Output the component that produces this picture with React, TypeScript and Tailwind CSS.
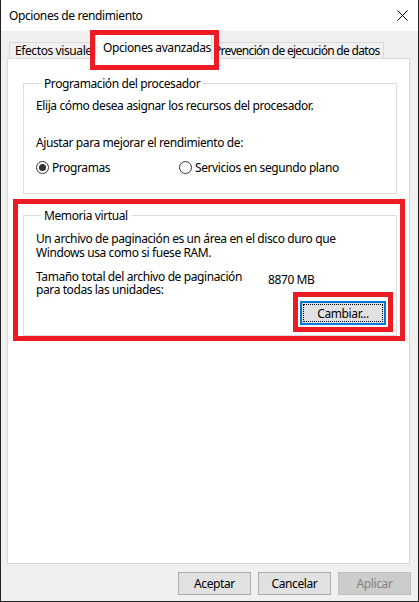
import type { ReactNode } from 'react'

const FONT = "font-['Noto_Sans',_'Liberation_Sans',_sans-serif]"

function Radio({ checked, label }: { checked?: boolean; label: string }) {
  return (
    <label className="flex items-center gap-[3px]">
      <span className="flex h-[13px] w-[13px] items-center justify-center rounded-full border border-[#333333] bg-white">
        {checked && <span className="h-[7px] w-[7px] rounded-full bg-[#333333]" />}
      </span>
      <span>{label}</span>
    </label>
  )
}

function GroupBox({ title, className, children }: { title: string; className?: string; children: ReactNode }) {
  return (
    <fieldset className={`w-[374px] border border-[#dcdcdc] ${className ?? ''}`}>
      <legend className="ml-[5px] px-[3px] leading-[15px]">{title}</legend>
      {children}
    </fieldset>
  )
}

function DialogButton({ children, disabled }: { children: ReactNode; disabled?: boolean }) {
  return (
    <button
      disabled={disabled}
      className={`h-[23px] w-[73px] border leading-[15px] ${
        disabled ? 'border-[#bfbfbf] bg-[#cccccc] text-[#838383]' : 'border-[#adadad] bg-[#e1e1e1] text-black'
      }`}
    >
      {children}
    </button>
  )
}

export default function App() {
  return (
    <div
      className={`${FONT} flex h-[602px] w-[419px] flex-col border-x border-b border-[#222222] bg-[#f0f0f0] text-[12px] tracking-[-0.4px] text-black`}
    >
      {/* title bar */}
      <div className="flex h-[31px] shrink-0 items-center justify-between bg-white pl-[8px] pr-[10px]">
        <span className="leading-[15px]">Opciones de rendimiento</span>
        <svg width="11" height="11" viewBox="0 0 11 11" className="mb-[1px]">
          <path d="M0.5 0.5 L10.5 10.5 M10.5 0.5 L0.5 10.5" stroke="#000" strokeWidth="1" />
        </svg>
      </div>

      {/* tabs */}
      <div className="flex h-[27px] shrink-0 items-end pl-[8px]">
        <div className="h-[16px] w-[88px] overflow-hidden border border-b-0 border-[#d9d9d9] bg-[#f0f0f0] pl-[5px] leading-[15px]">
          <span className="whitespace-nowrap">Efectos visuales</span>
        </div>
        <div className="relative z-10 -mb-px -ml-[2px] h-[25px] w-[117px] border border-b-0 border-[#d9d9d9] bg-white pl-[7px] pt-[5px] leading-[15px]">
          <span className="whitespace-nowrap">Opciones avanzadas</span>
          <div className="pointer-events-none absolute -left-[6px] -top-[5px] h-[40px] w-[129px] border-[5px] border-[#ed1c24]" />
        </div>
        <div className="-ml-[3px] h-[16px] border border-b-0 border-[#d9d9d9] bg-[#f0f0f0] pl-[4px] pr-[3px] leading-[15px] tracking-[-0.7px]">
          <span className="whitespace-nowrap">Prevención de ejecución de datos</span>
        </div>
      </div>

      {/* panel */}
      <div className="ml-[6px] flex h-[506px] w-[403px] shrink-0 flex-col border border-[#d9d9d9] bg-white px-[5px]">
        <GroupBox title="Programación del procesador" className="ml-[10px] mt-[17px] pb-[18px] pl-[12px]">
          <p className="mt-[7px] leading-[15px]">Elija cómo desea asignar los recursos del procesador.</p>
          <p className="mt-[22px] leading-[15px]">Ajustar para mejorar el rendimiento de:</p>
          <div className="mt-[10px] flex leading-[15px]">
            <div className="w-[143px]">
              <Radio checked label="Programas" />
            </div>
            <Radio label="Servicios en segundo plano" />
          </div>
        </GroupBox>

        <div className="mt-[5px] w-[392px] border-[5px] border-[#ed1c24] pl-[5px] pt-[4px]">
          <GroupBox title="Memoria virtual" className="flex flex-col pb-[3px] pl-[12px]">
            <div className="mt-[9px] leading-[14px]">
              <p>Un archivo de paginación es un área en el disco duro que</p>
              <p>Windows usa como si fuese RAM.</p>
            </div>
            <div className="mt-[10px] flex leading-[13px]">
              <div className="w-[232px]">
                <p>Tamaño total del archivo de paginación</p>
                <p>para todas las unidades:</p>
              </div>
              <span className="mt-[3px]">8870 MB</span>
            </div>
            <div className="-mt-[4px] mr-[3px] self-end">
              <div className="h-[40px] w-[100px] border-[5px] border-[#ed1c24] pl-[2px] pt-[4px]">
                <button className="flex h-[24px] w-[86px] items-center justify-center border-2 border-[#0078d7] bg-[#e1e1e1] p-[1px]">
                  <span className="flex h-full w-full items-center justify-center border border-dotted border-black leading-[15px]">
                    Cambiar...
                  </span>
                </button>
              </div>
            </div>
          </GroupBox>
        </div>
      </div>

      {/* buttons */}
      <div className="mt-[8px] flex justify-end gap-[7px] pr-[7px]">
        <DialogButton>Aceptar</DialogButton>
        <DialogButton>Cancelar</DialogButton>
        <DialogButton disabled>Aplicar</DialogButton>
      </div>
    </div>
  )
}
